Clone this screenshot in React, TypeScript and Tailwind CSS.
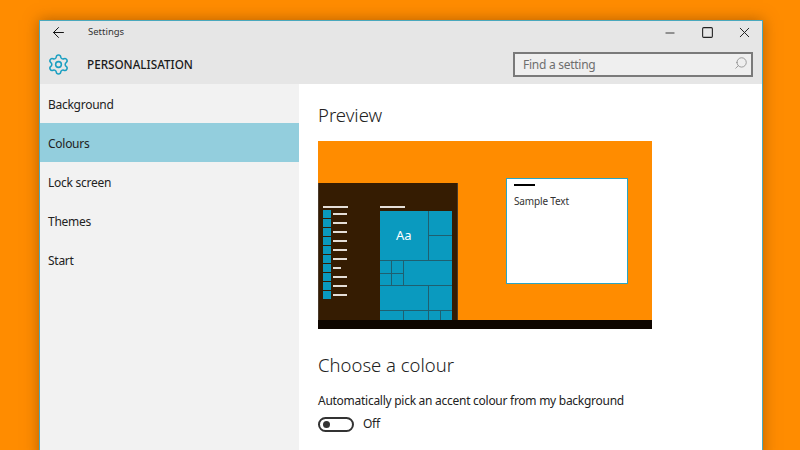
import { ArrowLeft, Minus, Search, Settings, Square, X } from 'lucide-react'

const navItems = ['Background', 'Colours', 'Lock screen', 'Themes', 'Start']

const appLines = [24, 24, 24, 24, 24, 24, 10, 24, 24, 24]

// col span, row span for the little start menu tiles
const tiles = [
  { w: 4, h: 4, label: 'Aa' },
  { w: 2, h: 2 },
  { w: 2, h: 2 },
  { w: 1, h: 1 },
  { w: 1, h: 1 },
  { w: 4, h: 2 },
  { w: 1, h: 1 },
  { w: 1, h: 1 },
  { w: 4, h: 2 },
  { w: 2, h: 2 },
  { w: 2, h: 1 },
  { w: 2, h: 1 },
  { w: 1, h: 1 },
  { w: 1, h: 1 },
]

const colSpans: Record<number, string> = { 1: 'col-span-1', 2: 'col-span-2', 4: 'col-span-4' }
const rowSpans: Record<number, string> = { 1: 'row-span-1', 2: 'row-span-2', 4: 'row-span-4' }

function StartMenu() {
  return (
    <div className="mt-[42px] flex h-[137px] w-[140px] border-x border-[#4a3a2a] bg-[#351c02] pt-[23px] pl-[4px]">
      <div className="flex w-[57px] flex-col">
        <div className="h-[2px] w-[25px] bg-[#e4ded8]" />
        <div className="mt-[2px] flex flex-col gap-[1px]">
          {appLines.map((w, i) => (
            <div key={i} className="flex h-[8px] items-center gap-[2px]">
              <div className="h-[8px] w-[8px] bg-[#0a9abf]" />
              <div className="h-[2px] bg-[#e4ded8]" style={{ width: w === 24 ? 14 : 8 }} />
            </div>
          ))}
        </div>
      </div>
      <div className="flex flex-col">
        <div className="h-[2px] w-[25px] bg-[#e4ded8]" />
        <div className="mt-[3px] grid h-[109px] w-[72px] grid-cols-6 auto-rows-[11.5px] gap-[1px] overflow-hidden bg-[#1f5f70]">
          {tiles.map((t, i) => (
            <div
              key={i}
              className={`flex items-center justify-center bg-[#0a9abf] text-[13px] text-white ${colSpans[t.w]} ${rowSpans[t.h]}`}
            >
              {t.label}
            </div>
          ))}
        </div>
      </div>
    </div>
  )
}

function Preview() {
  return (
    <div className="mt-[13px] flex h-[188px] w-[334px] flex-col bg-[#ff8c00]">
      <div className="flex h-[179px]">
        <StartMenu />
        <div className="mt-[37px] ml-[48px] h-[106px] w-[122px] border-[1.5px] border-[#2aa5c4] bg-white pt-[5px] pl-[7px]">
          <div className="h-[2px] w-[21px] bg-black" />
          <div className="mt-[8px] text-[10px] leading-[14px] tracking-[-0.15px] text-[#333]">Sample Text</div>
        </div>
      </div>
      <div className="h-[9px] bg-[#0e0600]" />
    </div>
  )
}

export default function App() {
  return (
    <div
      className="h-[450px] w-[800px] overflow-hidden bg-[#ff8c00] pt-[20px] pl-[39px]"
      style={{ fontFamily: '"Noto Sans", "Open Sans", sans-serif' }}
    >
      <div className="flex h-[440px] w-[724px] flex-col border border-b-0 border-[#4aa8bd] bg-white shadow-[0_0_14px_rgba(120,60,0,0.55)]">
        {/* title bar */}
        <div className="h-[63px] bg-[#e6e6e6]">
          <div className="flex h-[23px] items-center">
            <ArrowLeft className="ml-[10px] h-[17px] w-[17px] text-[#111]" strokeWidth={1.4} />
            <span className="ml-[21px] text-[9.5px] text-[#333]">Settings</span>
            <div className="ml-auto flex items-center text-[#222]">
              <Minus className="h-[14px] w-[14px]" strokeWidth={1.5} />
              <Square className="ml-[24px] h-[13px] w-[13px]" strokeWidth={2} />
              <X className="mr-[9px] ml-[22px] h-[17px] w-[17px]" strokeWidth={1.4} />
            </div>
          </div>
          <div className="flex h-[41px] items-center">
            <Settings className="ml-[7px] h-[23px] w-[23px] text-[#1a9fc1]" strokeWidth={1.6} />
            <span className="ml-[17px] text-[11.7px] font-medium text-[#1a1a1a]">PERSONALISATION</span>
            <div className="mr-[9px] ml-auto flex h-[25px] w-[240px] items-center justify-between border-2 border-[#7a7a7a] bg-[#efefef] pr-[3px] pl-[8px]">
              <span className="text-[12px] tracking-[-0.27px] text-[#6e6e6e]">Find a setting</span>
              <Search className="mb-[3px] h-[14px] w-[14px] -scale-x-100 text-[#8a8a8a]" strokeWidth={1.4} />
            </div>
          </div>
        </div>

        <div className="flex flex-1">
          {/* sidebar */}
          <nav className="w-[259px] bg-[#f2f2f2]">
            {navItems.map((item) => (
              <div
                key={item}
                className={`flex h-[39px] items-center pt-[2px] pl-[8px] text-[12px] tracking-[-0.27px] text-[#222] ${item === 'Colours' ? 'bg-[#93cedd]' : ''}`}
              >
                {item}
              </div>
            ))}
          </nav>

          {/* content */}
          <main className="flex-1 pt-[18px] pl-[19px]">
            <h2 className="text-[18.5px] leading-[26px] font-light text-[#222]">Preview</h2>
            <Preview />
            <h2 className="mt-[23px] text-[18.5px] leading-[26px] font-light text-[#222]">Choose a colour</h2>
            <p className="mt-[15px] text-[12px] leading-[16px] tracking-[-0.27px] text-[#222]">
              Automatically pick an accent colour from my background
            </p>
            <div className="mt-[6px] flex items-center">
              <div className="flex h-[15px] w-[36px] items-center rounded-full border-2 border-[#333] pl-[3px]">
                <div className="h-[7px] w-[7px] rounded-full bg-[#333]" />
              </div>
              <span className="ml-[9px] text-[12px] tracking-[-0.27px] text-[#222]">Off</span>
            </div>
          </main>
        </div>
      </div>
    </div>
  )
}
